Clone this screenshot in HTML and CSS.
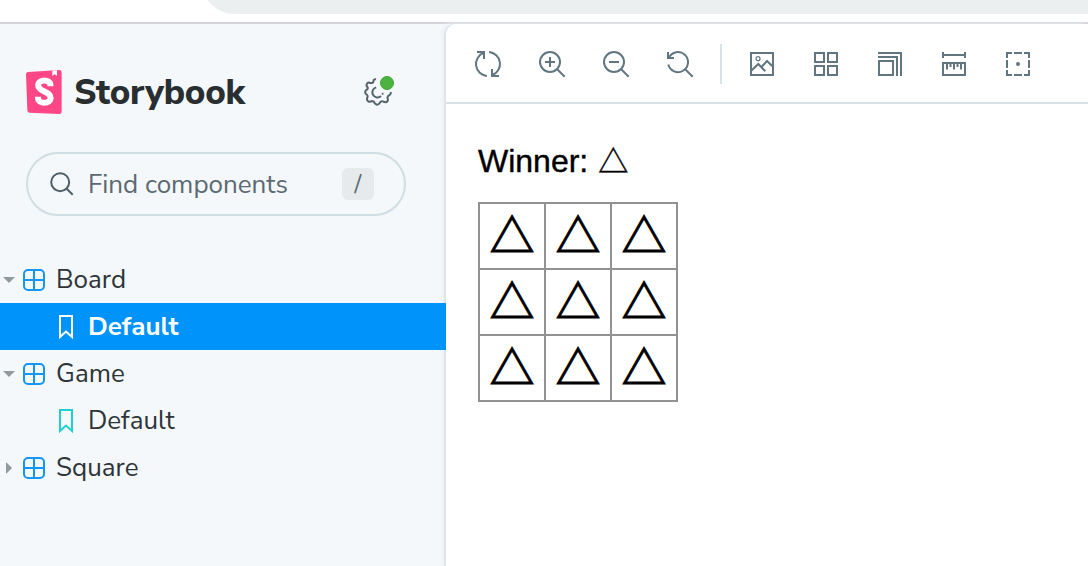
FILE: index.html
```html
<!DOCTYPE html>
<html lang="en">
<head>
<meta charset="utf-8">
<title>Storybook</title>
<link rel="stylesheet" href="styles.css">
</head>
<body>
<svg class="defs" aria-hidden="true">
  <symbol id="component" viewBox="0 0 22 22"><rect x="1" y="1" width="20" height="20" rx="4"/><path d="M11 1v20M1 11h20"/></symbol>
  <symbol id="bookmark" viewBox="0 0 16 26"><path d="M2 2h12v21l-6-5.5L2 23z"/></symbol>
</svg>
<div class="browser"><div class="address"></div></div>
<div class="app">
  <aside class="sidebar">
    <header class="brand">
      <svg class="mark" width="36" height="44" viewBox="0 0 36 44"><path fill="#ff4785" d="M2 2.1 33.5 0Q35.6 0 35.6 2.2V41.8Q35.6 44 33.5 44L3.6 42.7Q1.5 42.5 1.4 40.5L0 4.2Q0 2.3 2 2.1Z"/><path fill="#fff" d="M26.4.5 31 .2V6L28.8 4.3 26.2 5.8Z"/><path d="M24.4 16.2V14.8C24.4 9.2 12.2 9 12.2 15.2C12.2 22.2 24.6 20.6 24.6 27.8C24.6 34.6 12 34.4 12 28V26.8" fill="none" stroke="#fff" stroke-width="6"/></svg>
      <span class="name">Storybook</span>
      <span class="settings">
        <svg width="30" height="30" viewBox="0 0 30 30"><path stroke-linejoin="round" d="M12 2.2Q9.6 1.8 9.5 4.2Q9 6.6 6.3 6Q3.6 4.8 2.8 7.2Q2 9 3.6 10.2Q4.4 12.2 2 13.2Q.3 15.5 2 17Q4.4 18.5 3.3 20.6Q2.2 23.2 4.6 24.5Q6.2 25 7.8 24.1Q10 24.1 10.6 26.1Q13 29 15.2 26.6Q16.5 23.7 19 24.4Q22 26.2 23.7 23.8Q24.2 22.2 23.4 20.7Q23.6 18.8 25.6 18Q27.2 16.8 26.6 15"/><path d="M12.2 10.4A5.1 5.1 0 1 0 17 19"/><path d="M17.8 16.8h1.6"/></svg>
        <i class="dot"></i>
      </span>
    </header>
    <div class="search">
      <svg width="24" height="24" viewBox="0 0 24 24"><circle cx="10.2" cy="10.2" r="9"/><path d="m16.7 16.7 6 6"/></svg>
      <span class="hint">Find components</span>
      <kbd>/</kbd>
    </div>
    <nav class="tree">
      <div class="row"><i class="caret open"></i><svg class="component"><use href="#component"/></svg><span class="board">Board</span></div>
      <div class="row story selected"><svg class="bookmark"><use href="#bookmark"/></svg><span class="default">Default</span></div>
      <div class="row"><i class="caret open"></i><svg class="component"><use href="#component"/></svg><span class="game">Game</span></div>
      <div class="row story"><svg class="bookmark"><use href="#bookmark"/></svg><span class="default">Default</span></div>
      <div class="row"><i class="caret"></i><svg class="component"><use href="#component"/></svg><span class="square">Square</span></div>
    </nav>
  </aside>
  <main class="preview">
    <div class="toolbar">
      <svg viewBox="0 0 28 28"><path d="M13 26A12 12 0 0 1 9.8 2.8M3 2h7v7M15 2a12 12 0 0 1 3.2 23.2M25 26h-7v-7"/></svg>
      <svg viewBox="0 0 28 28"><circle cx="12" cy="12" r="10"/><path d="m19 19 7.7 7.7M7 12h10M12 7v10"/></svg>
      <svg viewBox="0 0 28 28"><circle cx="12" cy="12" r="10"/><path d="m19 19 7.7 7.7M7 12h10"/></svg>
      <svg viewBox="0 0 28 28"><path d="M2.3 14.5A10 10 0 1 0 3 7.8M2 2v6h6M19 19l7.7 7.7"/></svg>
      <i class="separator"></i>
      <svg viewBox="0 0 28 28"><rect x="3" y="3" width="22" height="22"/><circle cx="10" cy="8.7" r="2" stroke-width="1.2"/><path d="m3 21 7.3-7 7 7.3M13.7 16.7 19 11l6 5.7"/></svg>
      <svg viewBox="0 0 28 28"><path d="M3 3h9v9H3zM16 3h9v9h-9zM3 16h9v9H3zM16 16h9v9h-9z"/></svg>
      <svg viewBox="0 0 28 28"><path d="M3 11h14v14H3zM2 7h19v19M2 3h23v23"/></svg>
      <svg viewBox="0 0 28 28"><path d="M3 5h22M3 2v6M25 2v6M3 13h22v12H3zM7 13v6.5M10.5 13v4M14 13v6.5M17.5 13v4M21 13v6.5"/></svg>
      <svg viewBox="0 0 28 28"><path d="M3 8V3h5M10 3h8M20 3h5v5M25 10v8M25 20v5h-5M18 25h-8M8 25H3v-5M3 18v-8"/><circle class="fill" cx="14" cy="14" r="2"/></svg>
    </div>
    <section class="story-view">
      <p class="winner"><span>Winner:</span> <b class="tri">△</b></p>
      <div class="grid">
        <div>△</div><div>△</div><div>△</div>
        <div>△</div><div>△</div><div>△</div>
        <div>△</div><div>△</div><div>△</div>
      </div>
    </section>
  </main>
</div>
</body>
</html>
```
FILE: styles.css
```css
* { box-sizing: border-box; }
body { margin: 0; width: 1088px; height: 566px; overflow: hidden; background: #fff; color: #2e3438; font-family: "Nunito Sans", Lato, "Noto Sans", sans-serif; }
svg { flex: none; fill: none; stroke: currentColor; stroke-width: 2; }
.defs { display: none; }
.mark { stroke: none; }
.browser { height: 24px; border-bottom: 2px solid #d4d5d8; padding-left: 201px; overflow: hidden; }
.address { height: 34px; margin-top: -20px; background: #ebefef; border-bottom-left-radius: 34px; }
.app { display: flex; height: 542px; background: #f4f8fb; }
.sidebar { width: 446px; flex: none; }
.brand { display: flex; align-items: center; height: 44px; margin: 46px 0 0 26px; }
.name { margin: 2px 0 0 12px; width: 290px; font-size: 35px; font-weight: 800; line-height: 44px; letter-spacing: -.25px; color: #292f31; }
.settings { position: relative; width: 30px; height: 30px; color: #56646a; }
.settings svg { display: block; }
.dot { position: absolute; left: 16px; top: -1px; width: 14px; height: 14px; border-radius: 50%; background: #4cb341; border: 1px solid #40a438; }
.search { display: flex; align-items: center; width: 380px; height: 64px; margin: 38px 0 0 26px; padding: 0 30px 0 22px; border: 2px solid #d0dde3; border-radius: 32px; color: #5c6970; }
.search svg { color: #4f5e66; }
.hint { margin: 2px 0 0 14px; font-size: 26px; line-height: 32px; }
kbd { margin-left: auto; width: 32px; height: 32px; border-radius: 6px; background: #e6eaed; text-align: center; font: 24px/32px "Nunito Sans", Lato, sans-serif; }
.tree { margin-top: 40px; }
.row { display: flex; align-items: center; height: 47px; padding-left: 3px; font-size: 26px; line-height: 47px; }
.caret { width: 20px; height: 12px; display: flex; align-items: center; }
.caret::before { content: ""; margin-left: 3px; border: 6px solid transparent; border-left-color: #92999d; border-right: 0; }
.caret.open::before { margin-left: 0; border: 6px solid transparent; border-top-color: #92999d; border-bottom: 0; }
.component { width: 22px; height: 22px; margin: 1px 11px 0 0; color: #1595f8; }
.story { padding-left: 58px; }
.bookmark { width: 16px; height: 26px; margin: 1px 14px 0 0; color: #1fd1cd; }
.selected { position: relative; z-index: 1; background: #0093f9; color: #fff; font-weight: 700; }
.selected .bookmark { color: #fff; }
.preview { flex: 1; background: #fff; border-top-left-radius: 10px; box-shadow: -2px 0 0 #dfe4e8, -4px 0 4px #edf1f4; }
.toolbar { display: flex; align-items: center; height: 80px; padding-left: 28px; gap: 36px; border-bottom: 2px solid #d9e3e7; color: #627680; }
.toolbar svg { width: 28px; height: 28px; margin-top: 2px; }
.fill { fill: currentColor; stroke: none; }
.separator { width: 2px; height: 40px; margin: 2px -10px 0 -10px; background: #d9e3e7; }
.story-view { padding: 37px 0 0 32px; color: #000; }
.winner { display: flex; align-items: center; margin: 0; height: 40px; font: 32px/40px "Liberation Sans", Arial, sans-serif; -webkit-text-stroke: .4px #000; }
.tri { margin: -5px 0 0 10px; font: 30px/40px "Noto Sans CJK JP", sans-serif; -webkit-text-stroke: .5px #000; }
.grid { display: grid; grid-template-columns: repeat(3, 66px); grid-auto-rows: 66px; width: 200px; margin-top: 21px; border: solid #929292; border-width: 2px 0 0 2px; }
.grid div { border: solid #929292; border-width: 0 2px 2px 0; display: flex; justify-content: center; font: 700 45px/59px "Noto Sans CJK JP", sans-serif; -webkit-text-stroke: .9px #000; }
```
